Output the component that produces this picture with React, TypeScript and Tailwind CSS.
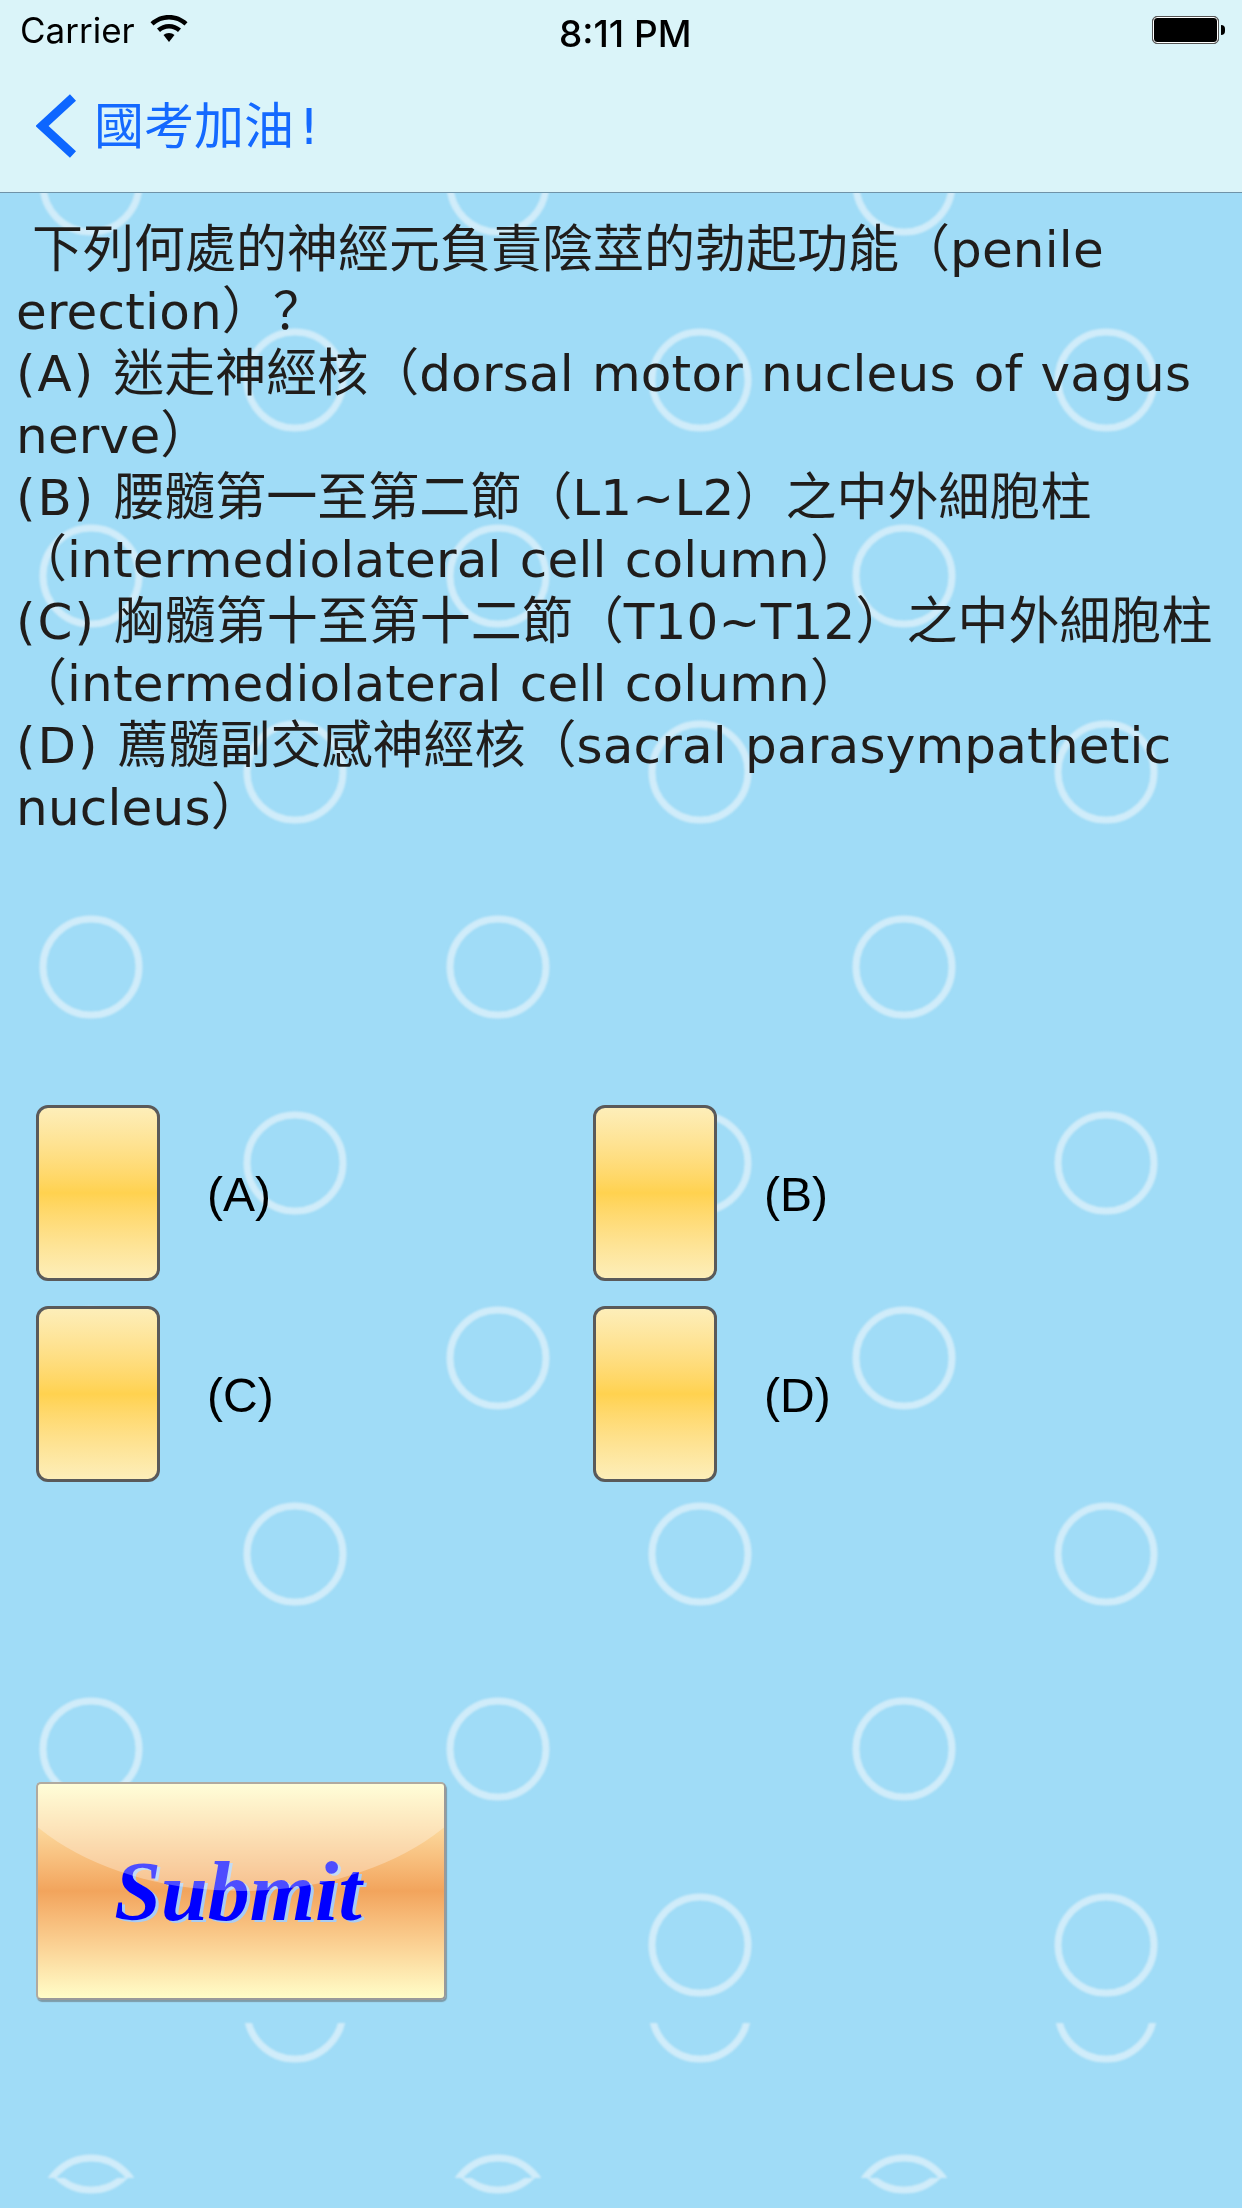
const FONT_BODY = "font-['DejaVu_Sans','Noto_Sans_CJK_TC',sans-serif]";

const lines = [
  " 下列何處的神經元負責陰莖的勃起功能\uFF08penile",
  "erection\uFF09\uFF1F",
  "(A) 迷走神經核\uFF08dorsal motor nucleus of vagus",
  "nerve\uFF09",
  "(B) 腰髓第一至第二節\uFF08L1~L2\uFF09之中外細胞柱",
  "\uFF08intermediolateral cell column\uFF09",
  "(C) 胸髓第十至第十二節\uFF08T10~T12\uFF09之中外細胞柱",
  "\uFF08intermediolateral cell column\uFF09 ",
  "(D) 薦髓副交感神經核\uFF08sacral parasympathetic",
  "nucleus\uFF09",
];

// wallpaper rings, two alternating columns
const rowsY = [184, 380, 576, 772, 967, 1163, 1358, 1554, 1749, 1945];
const oddX = [91, 498, 904];
const evenX = [295, 700, 1106];

function Wallpaper() {
  return (
    <svg className="absolute inset-0 blur-[1px]" width="1242" height="2208" viewBox="0 0 1242 2208" fill="none">
      <defs>
        <clipPath id="tileA"><rect x="0" y="0" width="1242" height="2023" /></clipPath>
        <clipPath id="tileB"><rect x="0" y="2023" width="1242" height="155" /></clipPath>
        <clipPath id="tileC"><rect x="0" y="2178" width="1242" height="30" /></clipPath>
      </defs>
      <g stroke="#dcf1fa" strokeWidth="7" opacity="0.8">
        <g clipPath="url(#tileA)">
          {rowsY.map((y, i) =>
            (i % 2 === 0 ? oddX : evenX).map((x) => <circle key={`${x}-${y}`} cx={x} cy={y} r="48" />)
          )}
        </g>
        <g clipPath="url(#tileB)">
          {evenX.map((x) => <circle key={x} cx={x} cy={2011} r="48" />)}
          {oddX.map((x) => <circle key={x} cx={x} cy={2206} r="48" />)}
        </g>
        <g clipPath="url(#tileC)">
          {oddX.map((x) => <circle key={x} cx={x} cy={2142} r="48" />)}
        </g>
      </g>
    </svg>
  );
}

// option prefix, hanzi and fullwidth punctuation each need their own metrics
function Line({ text }: { text: string }) {
  const parts = text.split(/(^\([A-D]\) |[\u3400-\u9fff]+|[\uFF08\uFF09\uFF1F])/);
  return (
    <div className="h-[62px] whitespace-pre">
      {parts.map((part, i) => {
        if (part === " ") return <span key={i}>{part}</span>;
        if (i % 2 === 0) return <span key={i} className="tracking-[0.2px] [word-spacing:2px]">{part}</span>;
        if (part.startsWith("(")) return <span key={i} className="tracking-[2px]">{part}</span>;
        if (/[\uFF08\uFF09\uFF1F]/.test(part)) {
          return <span key={i} className="font-['Noto_Sans_CJK_SC',sans-serif] text-[51px]">{part}</span>;
        }
        return <span key={i} className="text-[51px]">{part}</span>;
      })}
    </div>
  );
}

function Radio({ label }: { label: string }) {
  return (
    <div className="flex items-center">
      <div className="h-[176px] w-[124px] rounded-[12px] border-[3px] border-[#5a5a5a] bg-gradient-to-b from-[#fdeeb9] via-[#ffd24f] to-[#fdeeb9]" />
      <span className="ml-[47px] mt-[3px] font-['Liberation_Sans',sans-serif] text-[48px] text-black">{label}</span>
    </div>
  );
}

export default function App() {
  return (
    <div className="relative h-[2208px] w-[1242px] overflow-hidden bg-[#a0dcf7]">
      <Wallpaper />

      <div className="relative z-10">
        <header className="h-[193px] border-b border-[#6f93a8] bg-[#daf4f9]">
          <div className="relative flex h-[60px] items-center font-['Inter',sans-serif] text-[35px] text-black">
            <span className="ml-[20px]">Carrier</span>
            <svg className="ml-[15px] mb-[2px]" width="38" height="28" viewBox="0 0 38 28" fill="#000">
              <path d="M19 0C12 0 5.500 2.600 0.500 7.200L3.500 10.600C7.600 6.800 13 4.600 19 4.600C25 4.600 30.400 6.800 34.500 10.600L37.500 7.200C32.500 2.600 26 0 19 0Z" />
              <path d="M19 9C14.500 9 10.300 10.700 7 13.600L10 17C12.400 14.800 15.500 13.500 19 13.500C22.500 13.500 25.600 14.800 28 17L31 13.600C27.700 10.700 23.500 9 19 9Z" />
              <path d="M19 18C16.900 18 15 18.800 13.500 20.100L19 27L24.500 20.100C23 18.800 21.100 18 19 18Z" />
            </svg>
            <span className="absolute left-[559px] top-[6px] text-[37px] font-medium">8:11 PM</span>
            <div className="ml-auto mr-[17px] flex items-center">
              <div className="h-[28px] w-[67px] rounded-[5px] border border-[#555] bg-black outline outline-1 outline-white -outline-offset-2" />
              <div className="ml-[2px] h-[10px] w-[4px] rounded-r-full bg-black" />
            </div>
          </div>
          <div className="flex h-[132px] items-start">
            <svg className="ml-[36px] mt-[34px]" width="40" height="64" viewBox="0 0 40 64" fill="none">
              <path d="M37 3.500L6 32L37 60.500" stroke="#0d66ff" strokeWidth="9" />
            </svg>
            <span className={`ml-[18px] mt-[42px] ${FONT_BODY} text-[50px] leading-none text-[#1469ff]`}>
              國考加油<span className="ml-[5px]">!</span>
            </span>
          </div>
        </header>

        <main>
          <div className={`ml-[16px] mt-[21px] h-[625px] ${FONT_BODY} text-[50px] leading-[62px] text-[#201d1b]`}>
            {lines.map((line) => (
              <Line key={line} text={line} />
            ))}
          </div>

          <div className="ml-[36px] mt-[266px] grid w-[1000px] grid-cols-[557px_1fr] gap-y-[25px]">
            <Radio label="(A)" />
            <Radio label="(B)" />
            <Radio label="(C)" />
            <Radio label="(D)" />
          </div>

          <button className="relative ml-[36px] mt-[300px] block h-[218px] w-[410px] overflow-hidden rounded-[5px] border-[2px] border-[#b0aaa0] border-b-[#9a9a9a] border-r-[#9a9a9a] bg-gradient-to-b from-[#fffdc8] via-[#f2a45c] to-[#fffdc8] shadow-[1px_2px_1px_rgba(90,90,90,0.5)]">
            <span className="relative left-[-3px] top-[1px] font-['Liberation_Serif',serif] text-[84px] font-bold italic leading-none text-[#0000ff] [text-shadow:3px_2px_0_#a9cdf3]">
              Submit
            </span>
            <span className="absolute left-[-57px] top-[-231px] h-[338px] w-[520px] rounded-[50%] bg-white/30" />
          </button>
        </main>
      </div>
    </div>
  );
}
